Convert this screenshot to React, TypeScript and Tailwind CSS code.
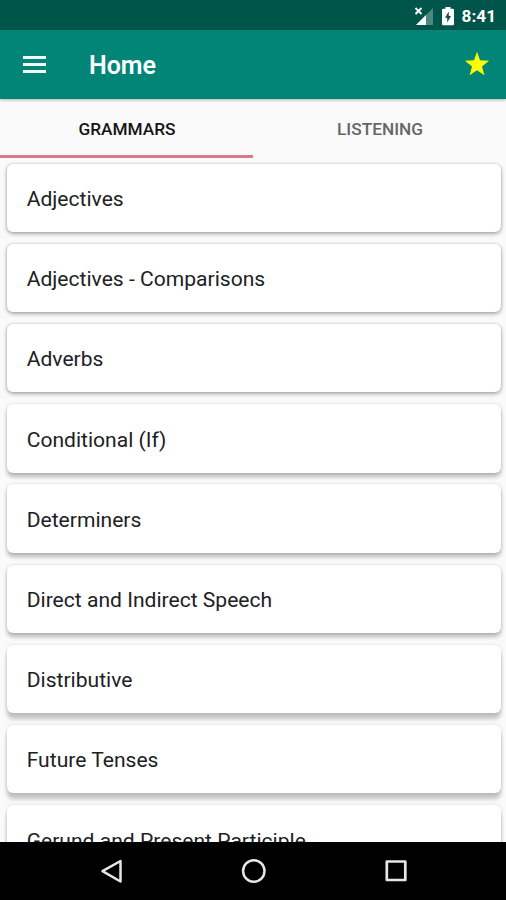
import clsx from "clsx";

type Topic = { title: string; shadow: string };

// the card shadow gets longer further down the screen
const SHADOW_TOP = "shadow-[0_2px_4px_rgba(0,0,0,0.3),0_0_3px_rgba(0,0,0,0.18)]";
const SHADOW_MID = "shadow-[0_4px_4px_rgba(0,0,0,0.25),0_0_3px_rgba(0,0,0,0.16)]";
const SHADOW_LOW = "shadow-[0_6px_4px_rgba(0,0,0,0.22),0_0_3px_rgba(0,0,0,0.14)]";

const topics: Topic[] = [
  { title: "Adjectives", shadow: SHADOW_TOP },
  { title: "Adjectives - Comparisons", shadow: SHADOW_TOP },
  { title: "Adverbs", shadow: SHADOW_TOP },
  { title: "Conditional (If)", shadow: SHADOW_MID },
  { title: "Determiners", shadow: SHADOW_MID },
  { title: "Direct and Indirect Speech", shadow: SHADOW_MID },
  { title: "Distributive", shadow: SHADOW_LOW },
  { title: "Future Tenses", shadow: SHADOW_LOW },
  { title: "Gerund and Present Participle", shadow: SHADOW_LOW },
];

function StatusBar() {
  return (
    <div className="flex h-[30px] shrink-0 items-center justify-end bg-[#00554a] pt-[3px] pr-[10px] text-white">
      <svg width="20" height="20" viewBox="0 0 20 20" className="mr-[7px]" aria-hidden>
        <path d="M19 1V18H2z" fill="#fff" opacity="0.3" />
        <path d="M12 8V18H2z" fill="#fff" />
        <path d="M1.500 1l6 6M7.500 1l-6 6" stroke="#fff" strokeWidth="1.900" />
      </svg>
      <svg width="14" height="20" viewBox="0 0 14 20" className="mr-[7px]" aria-hidden>
        <path d="M4.500 0h5v1.800h2.200q1.300 0 1.300 1.300v13.800q0 1.300-1.300 1.300H2.300Q1 18.200 1 16.900V3.100Q1 1.800 2.300 1.800h2.200z" fill="#fff" />
        <path d="M7.800 4.500v4.600H10l-3.800 6.300v-4.700H4z" fill="#00554a" />
      </svg>
      <span className="text-[17.200px] leading-none font-bold">8:41</span>
    </div>
  );
}

function Toolbar() {
  return (
    <header className="relative z-10 flex h-[68.500px] shrink-0 items-center bg-[#018577] pr-[16px] pl-[23px] shadow-[0_1px_3px_rgba(0,0,0,0.3)]">
      <button type="button" aria-label="Menu" className="flex w-[23px] flex-col gap-[4px]">
        <span className="h-[3px] bg-white/95" />
        <span className="h-[3px] bg-white/95" />
        <span className="h-[3px] bg-white/95" />
      </button>
      <h1 className="ml-[43px] flex-1 pt-[3px] text-[25px] leading-none font-semibold text-white">Home</h1>
      <svg width="26" height="26" viewBox="0 0 26 26" aria-label="Favourites">
        <path d="M13 .8l3 8.400 9 .5-7 5.800 2.400 8.700L13 19.300l-7.400 4.900L8 15.500 1 9.700l9-.5z" fill="#ffff00" />
      </svg>
    </header>
  );
}

function Tab({ label, active = false }: { label: string; active?: boolean }) {
  return (
    <button
      type="button"
      className={clsx(
        "flex flex-1 items-center justify-center border-b-[3px] pt-[6px] pl-px text-[17.250px] font-medium",
        active ? "border-[#dc7a8b] text-[#151515]" : "border-transparent text-[#666]"
      )}
    >
      {label}
    </button>
  );
}

function NavBar() {
  return (
    <nav className="flex h-[58px] shrink-0 items-center justify-between bg-black pr-[98px] pl-[100px]">
      <svg width="24" height="26" viewBox="0 0 24 26" fill="none" stroke="#e6e6e6" strokeWidth="2.500" strokeLinejoin="round" aria-label="Back">
        <path d="M20.500 3v20.500L2.500 13.200z" />
      </svg>
      <svg width="26" height="26" viewBox="0 0 26 26" fill="none" stroke="#e6e6e6" strokeWidth="2.500" aria-label="Home">
        <circle cx="12.800" cy="13" r="10.700" />
      </svg>
      <svg width="24" height="24" viewBox="0 0 24 24" fill="none" stroke="#e6e6e6" strokeWidth="2.700" strokeLinejoin="round" aria-label="Recents">
        <rect x="2.800" y="2.500" width="18.500" height="18.500" />
      </svg>
    </nav>
  );
}

export default function App() {
  return (
    <div className="flex h-[900px] w-[506px] flex-col overflow-hidden bg-[#fafafa] font-['Roboto',sans-serif]">
      <StatusBar />
      <Toolbar />
      <div className="flex h-[59.500px] shrink-0">
        <Tab label="GRAMMARS" active />
        <Tab label="LISTENING" />
      </div>
      <main className="flex min-h-0 flex-1 flex-col gap-[11.800px] overflow-hidden pt-[5.700px] pr-[5px] pl-[6.700px]">
        {topics.map((topic) => (
          <div
            key={topic.title}
            className={clsx("relative flex h-[68.400px] shrink-0 items-center rounded-[6px] bg-white pt-[2px] pl-5 text-[21.080px] text-[#202124]", topic.shadow)}
          >
            {topic.title}
          </div>
        ))}
      </main>
      <NavBar />
    </div>
  );
}
